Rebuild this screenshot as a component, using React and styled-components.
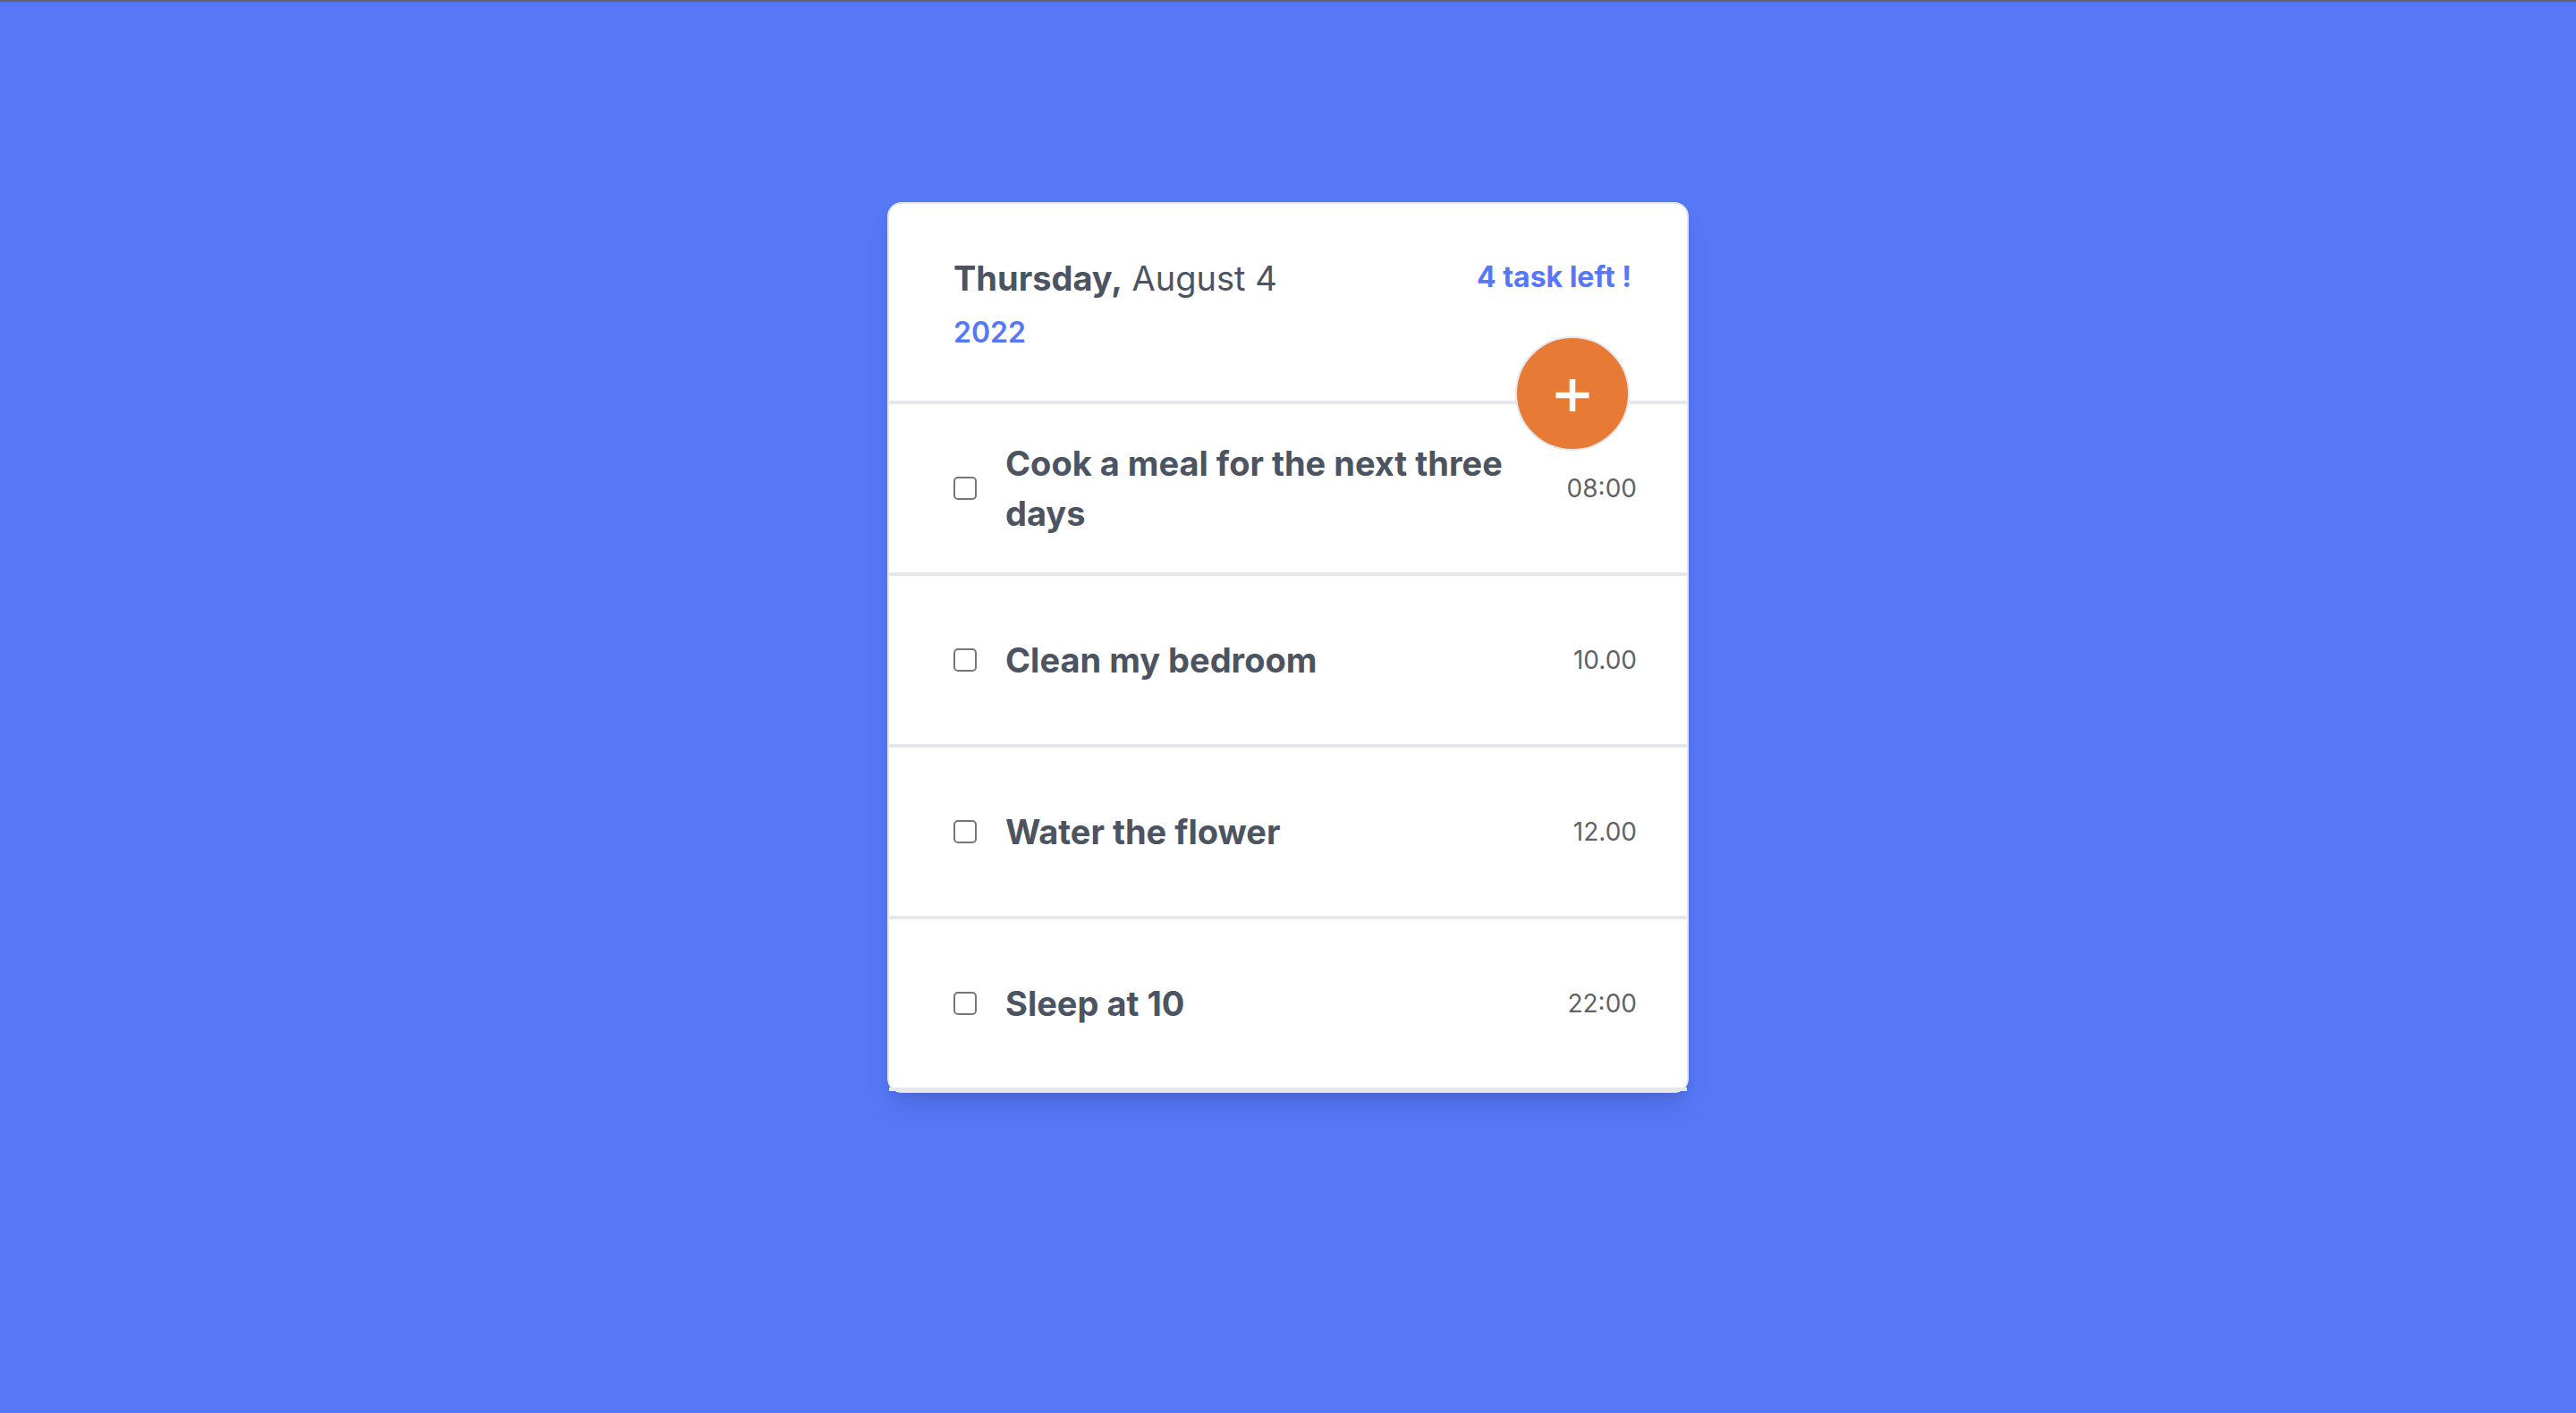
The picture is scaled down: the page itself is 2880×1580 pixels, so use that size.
import React, { useState } from "react";
import styled, { createGlobalStyle } from "styled-components";

const color = {
  blue: "#5678f7",
  text: "#4c5462",
  muted: "#636363",
  line: "#e5e7eb",
  orange: "#e77b35",
};

const GlobalStyle = createGlobalStyle`
  *, *::before, *::after { box-sizing: border-box; }
  body {
    margin: 0;
    background: ${color.blue};
    font-family: Inter, Roboto, "Liberation Sans", sans-serif;
    color: ${color.text};
  }
  h1, p, ul { margin: 0; padding: 0; }
`;

const Page = styled.div`
  min-height: 100vh;
  padding: 224px 32px;
  border-top: 2px solid #636469;
`;

const Card = styled.main`
  width: 100%;
  max-width: 896px;
  margin: 0 auto;
  background: #fff;
  border: 2px solid ${color.line};
  border-radius: 16px;
  box-shadow: 0 20px 30px -6px rgba(0, 0, 0, 0.1), 0 8px 12px -4px rgba(0, 0, 0, 0.07);
`;

const Header = styled.header`
  position: relative;
  display: flex;
  justify-content: space-between;
  align-items: flex-start;
  padding: 56px 62px 50px 72px;
  border-bottom: 4px solid ${color.line};
`;

const DateBlock = styled.div`
  display: flex;
  flex-direction: column;
  gap: 8px;
`;

const Title = styled.h1`
  font-size: 38px;
  line-height: 54px;
  font-weight: 400;
`;

const Accent = styled.p`
  font-size: 32px;
  line-height: 52px;
  font-weight: ${(p) => p.$weight};
  color: ${color.blue};
`;

const AddButton = styled.button`
  position: absolute;
  right: 64px;
  bottom: -56px;
  display: flex;
  align-items: center;
  justify-content: center;
  width: 128px;
  height: 128px;
  padding: 0;
  color: #fff;
  background: ${color.orange};
  border: 2px solid ${color.line};
  border-radius: 50%;
  cursor: pointer;
`;

const TaskList = styled.ul`
  list-style: none;
`;

const TaskRow = styled.li`
  display: flex;
  align-items: center;
  gap: 32px;
  min-height: 192px;
  padding: 0 56px 0 72px;
  border-bottom: 4px solid ${color.line};
`;

const Checkbox = styled.input`
  appearance: none;
  flex: none;
  width: 26px;
  height: 26px;
  margin: 0;
  background: #fff;
  border: 2px solid #767676;
  border-radius: 5px;
  &:checked {
    background: ${color.blue};
    border-color: ${color.blue};
  }
`;

const TaskName = styled.label`
  flex: 1;
  font-size: 38px;
  line-height: 56px;
  font-weight: 700;
`;

const Time = styled.time`
  font-size: 28px;
  line-height: 40px;
  color: ${color.muted};
`;

const tasks = [
  { id: "cook", name: "Cook a meal for the next three days", time: "08:00" },
  { id: "clean", name: "Clean my bedroom", time: "10.00" },
  { id: "water", name: "Water the flower", time: "12.00" },
  { id: "sleep", name: "Sleep at 10", time: "22:00" },
];

export default function App() {
  const [done, setDone] = useState({});
  const left = tasks.filter((task) => !done[task.id]).length;
  const toggle = (id) => setDone((prev) => ({ ...prev, [id]: !prev[id] }));

  return (
    <>
      <GlobalStyle />
      <Page>
        <Card>
          <Header>
            <DateBlock>
              <Title>
                <b>Thursday,</b> August 4
              </Title>
              <Accent $weight={600}>2022</Accent>
            </DateBlock>
            <Accent $weight={700}>{left} task left !</Accent>
            <AddButton type="button" aria-label="Add task">
              <svg width="42" height="42" viewBox="0 0 42 42" aria-hidden="true">
                <path d="M21 5v36M2.5 23h37" stroke="currentColor" strokeWidth="6.5" />
              </svg>
            </AddButton>
          </Header>
          <TaskList>
            {tasks.map((task) => (
              <TaskRow key={task.id}>
                <Checkbox
                  type="checkbox"
                  id={task.id}
                  checked={Boolean(done[task.id])}
                  onChange={() => toggle(task.id)}
                />
                <TaskName htmlFor={task.id}>{task.name}</TaskName>
                <Time>{task.time}</Time>
              </TaskRow>
            ))}
          </TaskList>
        </Card>
      </Page>
    </>
  );
}
